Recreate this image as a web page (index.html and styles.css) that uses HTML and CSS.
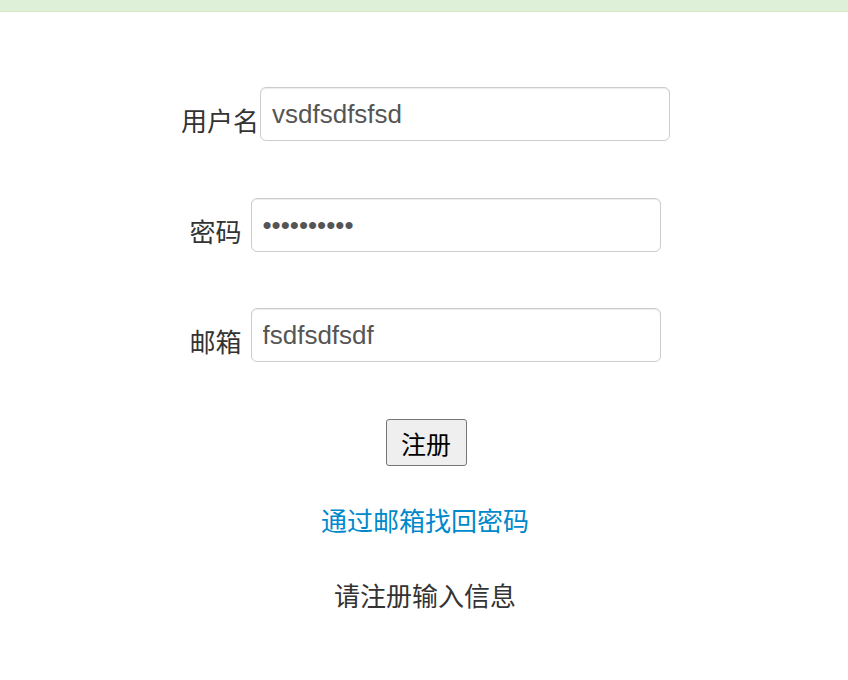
FILE: index.html
```html
<!DOCTYPE html>
<html lang="zh">
<head>
<meta charset="utf-8">
<title>注册</title>
<link rel="stylesheet" href="styles.css">
</head>
<body>
<div class="topbar"></div>
<form class="form">
  <div class="row row-user">
    <label class="label" for="u">用户名</label>
    <input class="input" id="u" type="text" value="vsdfsdfsfsd">
  </div>
  <div class="row">
    <label class="label" for="p">密码</label>
    <input class="input" id="p" type="password" value="1234567890">
  </div>
  <div class="row row-last">
    <label class="label" for="e">邮箱</label>
    <input class="input" id="e" type="text" value="fsdfsdfsdf">
  </div>
  <button class="btn" type="button">注册</button>
  <a class="link" href="#">通过邮箱找回密码</a>
  <p class="msg">请注册输入信息</p>
</form>
</body>
</html>
```
FILE: styles.css
```css
html, body {
  margin: 0;
  padding: 0;
  background: #fff;
}
body {
  font-family: "Noto Sans CJK SC", "Liberation Sans", sans-serif;
  color: #333;
}
.topbar {
  height: 11px;
  background: #dff0d8;
  border-bottom: 1px solid #d6e9c6;
}
.form {
  display: flex;
  flex-direction: column;
  align-items: center;
  padding-top: 75px;
  padding-left: 2px;
}
.row {
  display: flex;
  align-items: center;
  gap: 9px;
  margin-bottom: 56px;
}
.row-user {
  gap: 1px;
  padding-left: 1px;
  margin-bottom: 57px;
}
.row-last {
  margin-bottom: 57px;
}
.label {
  font-size: 26px;
  line-height: 30px;
  margin-top: 12px;
  color: #333;
}
.input {
  box-sizing: border-box;
  width: 410px;
  height: 54px;
  padding: 0 11px;
  font-family: "Liberation Sans", Arial, sans-serif;
  font-size: 26px;
  color: #555;
  background: #fff;
  border: 1px solid #ccc;
  border-radius: 6px;
  box-shadow: inset 0 1px 1px rgba(0, 0, 0, 0.075);
  outline: none;
}
.btn {
  box-sizing: border-box;
  width: 81px;
  height: 47px;
  margin-left: 2px;
  padding: 0;
  font-family: "Noto Sans CJK SC", sans-serif;
  font-size: 25px;
  color: #000;
  background: #efefef;
  border: 1px solid #767676;
  border-radius: 3px;
}
.link {
  display: block;
  margin-top: 36px;
  font-size: 26px;
  line-height: 36px;
  color: #0088cc;
  text-decoration: none;
}
.msg {
  margin: 39px 0 0;
  font-size: 26px;
  line-height: 36px;
  color: #333;
}
```
